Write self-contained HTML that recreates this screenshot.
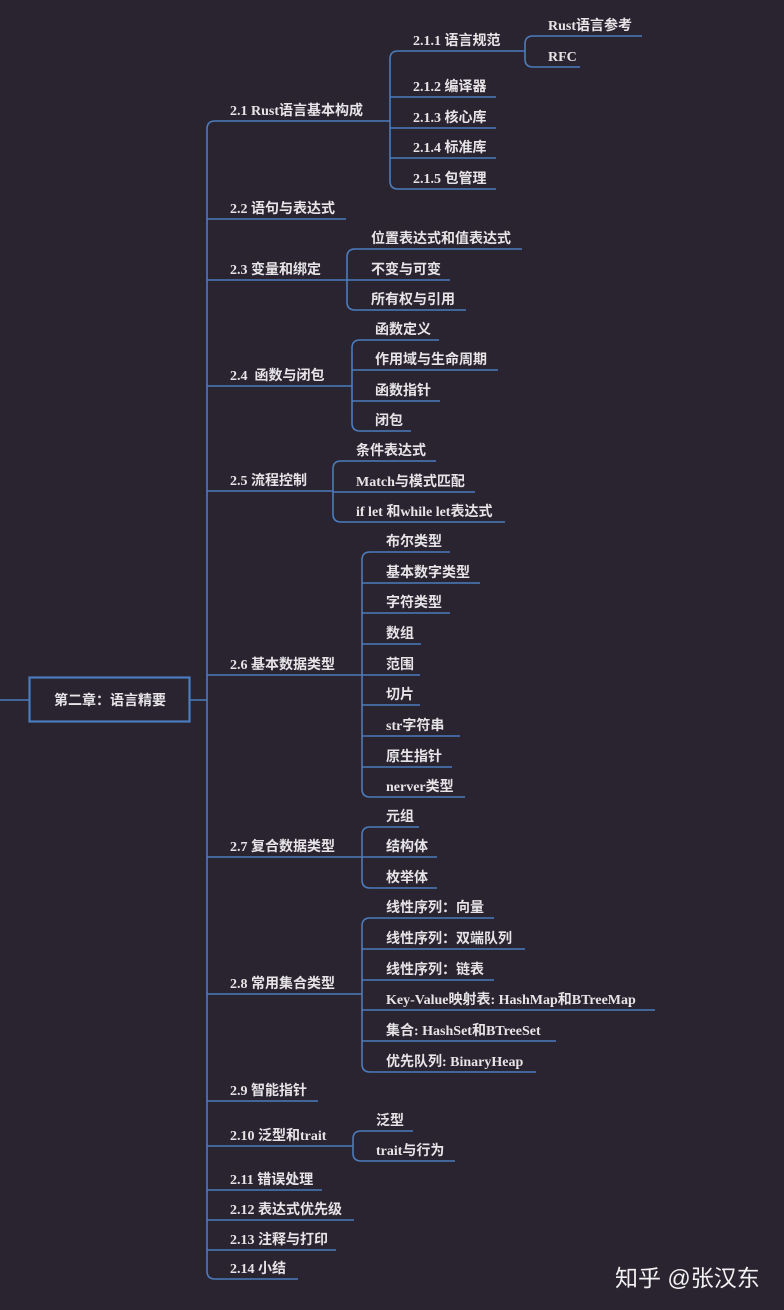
<!DOCTYPE html>
<html><head><meta charset="utf-8">
<style>
html,body{margin:0;padding:0;background:#2a2431;}
svg{display:block}
text{font-family:"Liberation Serif","Noto Sans CJK SC",serif;font-size:14px;font-weight:bold;fill:#e6e4e6;}
.wm{font-family:"Liberation Sans","Noto Sans CJK SC",sans-serif;font-size:23px;font-weight:normal;fill:#f2f2f2;}
</style></head>
<body>
<svg id="s" width="784" height="1310" viewBox="0 0 784 1310" xmlns="http://www.w3.org/2000/svg">
<rect width="784" height="1310" fill="#2a2431"/>
<g id="lines" fill="none" stroke="#4b7cbd" stroke-width="1.6"></g>
<g id="txt"></g>
<line x1="0" y1="700" x2="29" y2="700" stroke="#4b7cbd" stroke-width="1.6"/>
<line x1="190" y1="700" x2="207" y2="700" stroke="#4b7cbd" stroke-width="1.6"/>
<rect x="29.5" y="677.5" width="160" height="44" fill="none" stroke="#4b7cbd" stroke-width="2.2"/>
<text x="110" y="705" text-anchor="middle" style="font-family:'Liberation Sans','Noto Sans CJK SC',sans-serif;font-size:14px">第二章：语言精要</text>
<text class="wm" x="615" y="1286">知乎 @张汉东</text>
</svg>
<script>
var L=document.getElementById('lines'),T=document.getElementById('txt'),h='',t='';
function grp(tx,x,items){
 var r=8,n=items.length,y0=items[0][1],yn=items[n-1][1];
 h+='<path d="M'+tx+','+(y0+r)+' L'+tx+','+(yn-r)+'"/>';
 items.forEach(function(it,i){
  var y=it[1],e=it[2];
  if(i==0) h+='<path d="M'+tx+','+(y+r)+' Q'+tx+','+y+' '+(tx+r)+','+y+' L'+e+','+y+'"/>';
  else if(i==n-1) h+='<path d="M'+tx+','+(y-r)+' Q'+tx+','+y+' '+(tx+r)+','+y+' L'+e+','+y+'"/>';
  else h+='<path d="M'+tx+','+y+' L'+e+','+y+'"/>';
  t+='<text x="'+x+'" y="'+(y-6)+'">'+it[0]+'</text>';
 });
}
grp(207,230,[["2.1 Rust语言基本构成",121,390],["2.2 语句与表达式",219,346],["2.3 变量和绑定",280,347],["2.4&#160; 函数与闭包",386,352],["2.5 流程控制",491,333],["2.6 基本数据类型",675,362],["2.7 复合数据类型",857,362],["2.8 常用集合类型",994,362],["2.9 智能指针",1101,318],["2.10 泛型和trait",1146,353],["2.11 错误处理",1190,322],["2.12 表达式优先级",1220,354],["2.13 注释与打印",1250,336],["2.14 小结",1279,298]]);
grp(390,413,[["2.1.1 语言规范",51,525],["2.1.2 编译器",97,496],["2.1.3 核心库",128,496],["2.1.4 标准库",158,496],["2.1.5 包管理",189,496]]);
grp(525,548,[["Rust语言参考",36,642],["RFC",67,580]]);
grp(347,371,[["位置表达式和值表达式",249,522],["不变与可变",280,450],["所有权与引用",310,466]]);
grp(352,375,[["函数定义",340,439],["作用域与生命周期",370,498],["函数指针",401,440],["闭包",431,411]]);
grp(333,356,[["条件表达式",461,436],["Match与模式匹配",492,475],["if let 和while let表达式",522,505]]);
grp(362,386,[["布尔类型",552,450],["基本数字类型",583,480],["字符类型",613,450],["数组",644,421],["范围",675,420],["切片",705,420],["str字符串",736,460],["原生指针",767,452],["nerver类型",797,465]]);
grp(362,386,[["元组",827,419],["结构体",857,437],["枚举体",888,437]]);
grp(362,386,[["线性序列：向量",918,494],["线性序列：双端队列",949,525],["线性序列：链表",980,494],["Key-Value映射表: HashMap和BTreeMap",1010,655],["集合: HashSet和BTreeSet",1041,556],["优先队列: BinaryHeap",1072,536]]);
grp(353,376,[["泛型",1131,413],["trait与行为",1161,455]]);
L.innerHTML=h;T.innerHTML=t;
</script>
</body></html>
